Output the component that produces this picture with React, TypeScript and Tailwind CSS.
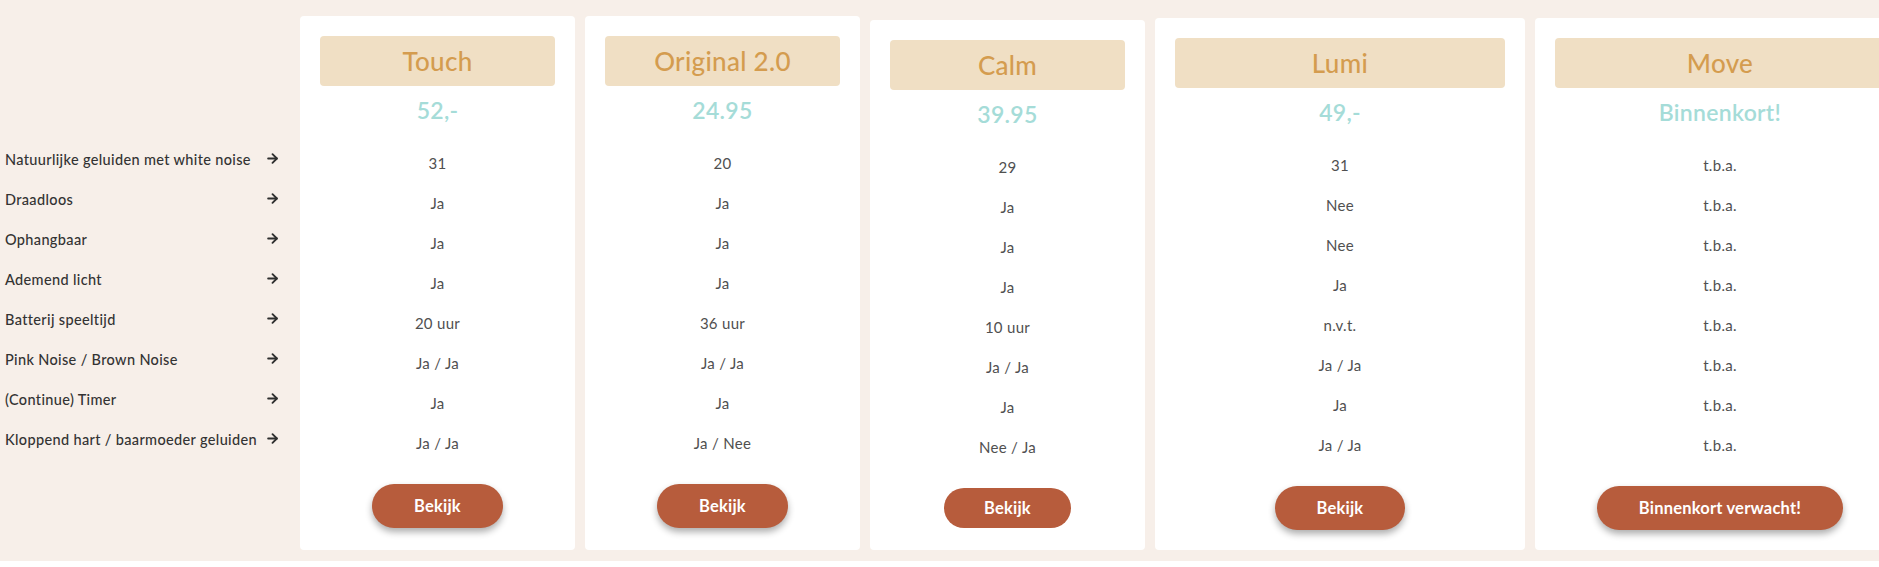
import { ArrowRight } from "lucide-react";

type Product = {
  name: string;
  price: string;
  values: string[];
  button: string;
  cardClass: string;
  buttonClass: string;
};

const features = [
  "Natuurlijke geluiden met white noise",
  "Draadloos",
  "Ophangbaar",
  "Ademend licht",
  "Batterij speeltijd",
  "Pink Noise / Brown Noise",
  "(Continue) Timer",
  "Kloppend hart / baarmoeder geluiden",
];

const shadowBtn = "h-11 px-[42px] shadow-[0_4px_7px_rgba(0,0,0,0.32)]";

const products: Product[] = [
  {
    name: "Touch",
    price: "52,-",
    values: ["31", "Ja", "Ja", "Ja", "20 uur", "Ja / Ja", "Ja", "Ja / Ja"],
    button: "Bekijk",
    cardClass: "w-[275px] mt-4",
    buttonClass: shadowBtn,
  },
  {
    name: "Original 2.0",
    price: "24.95",
    values: ["20", "Ja", "Ja", "Ja", "36 uur", "Ja / Ja", "Ja", "Ja / Nee"],
    button: "Bekijk",
    cardClass: "w-[275px] mt-4",
    buttonClass: shadowBtn,
  },
  {
    name: "Calm",
    price: "39.95",
    values: ["29", "Ja", "Ja", "Ja", "10 uur", "Ja / Ja", "Ja", "Nee / Ja"],
    button: "Bekijk",
    cardClass: "w-[275px] mt-5",
    buttonClass: "h-10 px-10",
  },
  {
    name: "Lumi",
    price: "49,-",
    values: ["31", "Nee", "Nee", "Ja", "n.v.t.", "Ja / Ja", "Ja", "Ja / Ja"],
    button: "Bekijk",
    cardClass: "w-[370px] mt-[18px]",
    buttonClass: shadowBtn,
  },
  {
    name: "Move",
    price: "Binnenkort!",
    values: Array(8).fill("t.b.a."),
    button: "Binnenkort verwacht!",
    cardClass: "w-[370px] mt-[18px]",
    buttonClass: shadowBtn,
  },
];

const ProductCard = ({ p }: { p: Product }) => (
  <div className={`shrink-0 rounded-[4px] bg-white p-5 ${p.cardClass}`}>
    <div className="flex h-[50px] items-center justify-center rounded-[4px] bg-[#f0dfc4]">
      <span className="text-[26px] font-medium tracking-[0.3px] text-[#d49c4f]">{p.name}</span>
    </div>
    <div className="flex h-12 items-center justify-center text-[23px] font-semibold tracking-[0.3px] text-[#a5dcd8]">
      {p.price}
    </div>
    <div className="mt-[9px]">
      {p.values.map((v, i) => (
        <div key={i} className="flex h-10 items-center justify-center text-[15px] tracking-[0.3px] text-[#505050]">
          {v}
        </div>
      ))}
    </div>
    <div className="mt-[21px] flex justify-center">
      <button className={`rounded-full bg-[#b75c3c] text-[16.5px] font-bold tracking-[0.2px] text-white ${p.buttonClass}`}>
        {p.button}
      </button>
    </div>
  </div>
);

const App = () => {
  return (
    <div
      className="h-[561px] w-full overflow-hidden bg-[#f7efe9]"
      style={{ fontFamily: "Lato, 'Noto Sans', sans-serif" }}
    >
      <div className="flex items-start">
        {/* Feature labels */}
        <div className="w-[300px] shrink-0 pl-[5px] pr-5 pt-[140px]">
          {features.map((f) => (
            <div key={f} className="flex h-10 items-center justify-between text-[14.5px] font-medium tracking-[0.35px] text-[#333]">
              <span>{f}</span>
              <ArrowRight className="-mt-1 h-[15px] w-[15px] shrink-0 text-[#2f2f2f]" strokeWidth={3} />
            </div>
          ))}
        </div>

        {/* Product cards */}
        <div className="flex gap-[10px]">
          {products.map((p) => (
            <ProductCard key={p.name} p={p} />
          ))}
        </div>
      </div>
    </div>
  );
};

export default App;
